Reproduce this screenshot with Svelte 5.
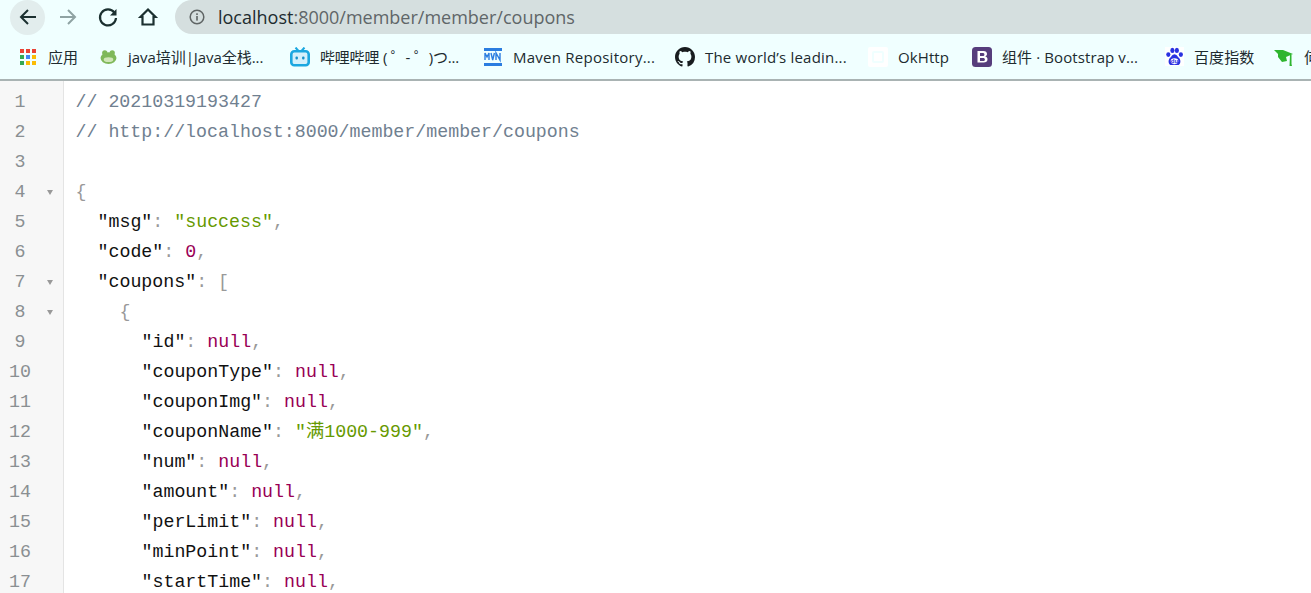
<script>
	const bookmarks = [
		{ icon: 'apps', label: '应用', width: 80 },
		{ icon: 'frog', label: 'java培训|Java全栈...', width: 192 },
		{ icon: 'bili', label: '哔哩哔哩 ( ゜- ゜)つ...', width: 193 },
		{ icon: 'mvn', label: 'Maven Repository...', width: 192 },
		{ icon: 'github', label: 'The world’s leadin...', width: 193 },
		{ icon: 'ok', label: 'OkHttp', width: 104 },
		{ icon: 'boot', label: '组件 · Bootstrap v...', width: 192 },
		{ icon: 'baidu', label: '百度指数', width: 110 },
		{ icon: 'cap', label: '何', width: 40 }
	];

	const str = (t) => ({ c: 'str', t });
	const key = (t) => ({ c: 'key', t });
	const p = (t) => ({ c: 'punc', t });
	const nul = { c: 'kw', t: 'null' };
	const nullRow = (name) => ({ indent: 6, parts: [key(`"${name}"`), p(': '), nul, p(',')] });

	const lines = [
		{ indent: 0, parts: [{ c: 'cmt', t: '// 20210319193427' }] },
		{ indent: 0, parts: [{ c: 'cmt', t: '// http://localhost:8000/member/member/coupons' }] },
		{ indent: 0, parts: [] },
		{ indent: 0, fold: true, parts: [p('{')] },
		{ indent: 2, parts: [key('"msg"'), p(': '), str('"success"'), p(',')] },
		{ indent: 2, parts: [key('"code"'), p(': '), { c: 'kw', t: '0' }, p(',')] },
		{ indent: 2, fold: true, parts: [key('"coupons"'), p(': [')] },
		{ indent: 4, fold: true, parts: [p('{')] },
		nullRow('id'),
		nullRow('couponType'),
		nullRow('couponImg'),
		{ indent: 6, parts: [key('"couponName"'), p(': '), str('"满1000-999"'), p(',')] },
		nullRow('num'),
		nullRow('amount'),
		nullRow('perLimit'),
		nullRow('minPoint'),
		nullRow('startTime')
	];

	const appColors = [
		['#ea4335', '#ea4335', '#ea4335'],
		['#34a853', '#4285f4', '#fbbc05'],
		['#34a853', '#fbbc05', '#fbbc05']
	];
</script>

<div class="chrome">
	<div class="toolbar">
		<button class="nav back" aria-label="back">
			<svg viewBox="0 0 24 24" width="24" height="24"><path d="M20 12H5M12 5l-7 7 7 7" fill="none" stroke="#1b3030" stroke-width="2"/></svg>
		</button>
		<button class="nav fwd" aria-label="forward">
			<svg viewBox="0 0 24 24" width="24" height="24"><path d="M4 12h15M12 5l7 7-7 7" fill="none" stroke="#8fa3a3" stroke-width="2"/></svg>
		</button>
		<button class="nav reload" aria-label="reload">
			<svg viewBox="0 0 24 24" width="24" height="24"><path d="M18.400 7.600A8 8 0 1 0 20 13" fill="none" stroke="#1b3030" stroke-width="2.200"/><path d="M20.500 4v6.500H14z" fill="#1b3030"/></svg>
		</button>
		<button class="nav home" aria-label="home">
			<svg viewBox="0 0 24 24" width="24" height="24"><path d="M12 4.500 4.500 12h2v7.500h11V12h2z" fill="none" stroke="#1b3030" stroke-width="2.200"/></svg>
		</button>
		<div class="omnibox">
			<svg class="info" viewBox="0 0 16 16" width="16" height="16"><circle cx="8" cy="8" r="6.800" fill="none" stroke="#5f6565" stroke-width="1.500"/><rect x="7.200" y="7" width="1.600" height="4.600" fill="#5f6565"/><rect x="7.200" y="4.300" width="1.600" height="1.700" fill="#5f6565"/></svg>
			<span class="url"><b>localhost</b>:8000/member/member/coupons</span>
		</div>
	</div>
	<div class="bookmarks">
		{#each bookmarks as b}
			<div class="bm {b.icon}" style="width: {b.width}px">
				<span class="ico">
					{#if b.icon === 'apps'}
						<svg viewBox="0 0 16 16" width="16" height="16">
							{#each appColors as row, y}
								{#each row as fill, x}<rect x={x * 6} y={y * 6} width="4" height="4" {fill} />{/each}
							{/each}
						</svg>
					{:else if b.icon === 'frog'}
						<svg viewBox="0 0 16 16" width="17" height="17"><ellipse cx="8" cy="9.500" rx="7.500" ry="5.500" fill="#7fb85a"/><circle cx="4.500" cy="4.500" r="2.500" fill="#7fb85a"/><circle cx="11.500" cy="4.500" r="2.500" fill="#7fb85a"/><ellipse cx="8" cy="11" rx="4.500" ry="2.200" fill="#cfe5b8"/></svg>
					{:else if b.icon === 'bili'}
						<svg viewBox="0 0 20 20" width="20" height="20"><path d="M5.500 .5 8.500 4M14.500 .5 11.500 4" stroke="#1ba7e0" stroke-width="2" fill="none"/><rect x="1.300" y="4.300" width="17.400" height="14" rx="3" fill="#d4f0fb" stroke="#1ba7e0" stroke-width="2.600"/><rect x="5.500" y="9.500" width="2.400" height="3" rx="1" fill="#1590c8"/><rect x="12.100" y="9.500" width="2.400" height="3" rx="1" fill="#1590c8"/></svg>
					{:else if b.icon === 'mvn'}
						<svg viewBox="0 0 18 18" width="18" height="18"><rect y="0" width="18" height="3" fill="#2b7de0"/><rect y="15" width="18" height="3" fill="#2b7de0"/><path d="M1 12V5l2 4 2-4v7M7 5l1.700 7L10.400 5M12 12V5l4 7V5" fill="none" stroke="#2b7de0" stroke-width="1.400"/></svg>
					{:else if b.icon === 'github'}
						<svg viewBox="0 0 16 16" width="20" height="20"><path fill="#181c1f" d="M8 0C3.580 0 0 3.580 0 8c0 3.540 2.290 6.530 5.470 7.590.4.070.55-.17.55-.38 0-.19-.01-.82-.01-1.490-2.010.37-2.530-.49-2.690-.94-.09-.23-.48-.94-.82-1.130-.28-.15-.68-.52-.01-.53.63-.01 1.080.58 1.230.82.72 1.210 1.870.87 2.330.66.07-.52.28-.87.51-1.070-1.780-.2-3.640-.89-3.640-3.950 0-.87.31-1.590.82-2.150-.08-.2-.36-1.020.08-2.120 0 0 .67-.21 2.200.82.64-.18 1.320-.27 2-.27s1.360.09 2 .27c1.530-1.040 2.200-.82 2.200-.82.44 1.100.16 1.920.08 2.120.51.56.82 1.270.82 2.150 0 3.070-1.870 3.750-3.650 3.950.29.25.54.73.54 1.480 0 1.070-.01 1.930-.01 2.200 0 .21.15.46.55.38A8.010 8.010 0 0 0 16 8c0-4.420-3.580-8-8-8z"/></svg>
					{:else if b.icon === 'ok'}
						<svg viewBox="0 0 20 20" width="20" height="20"><rect width="20" height="20" rx="2" fill="#fff"/><rect x="5" y="5" width="10" height="10" rx="1" fill="none" stroke="#f0ffff" stroke-width="2"/></svg>
					{:else if b.icon === 'boot'}
						<svg viewBox="0 0 20 20" width="20" height="20"><rect width="20" height="20" rx="3.500" fill="#563d7c"/><path fill="#fff" fill-rule="evenodd" d="M5.500 4h6c2.200 0 3.500 1.100 3.500 2.900 0 1.200-.7 2.100-1.800 2.500 1.500.3 2.300 1.400 2.300 2.800 0 2.100-1.500 3.300-4 3.300h-6zM8 6v3h2.600c1.200 0 1.800-.5 1.800-1.500S11.800 6 10.700 6zM8 11v3h3c1.200 0 1.900-.5 1.900-1.500S12.200 11 11 11z"/></svg>
					{:else if b.icon === 'baidu'}
						<svg viewBox="0 0 20 20" width="19" height="19"><rect width="20" height="20" fill="#fff"/><ellipse cx="3.500" cy="8" rx="2.200" ry="2.600" fill="#2932e1"/><ellipse cx="7.800" cy="3.600" rx="2.200" ry="2.800" fill="#2932e1"/><ellipse cx="12.500" cy="3.600" rx="2.200" ry="2.800" fill="#2932e1"/><ellipse cx="16.700" cy="8" rx="2.200" ry="2.600" fill="#2932e1"/><path d="M10 7.500c-2.500 0-3 2.500-4.500 3.700C3 13 3 19 7 19c1.300 0 2-.4 3-.4s1.800.4 3 .4c4 0 4-6 1.500-7.800C13 10 12.500 7.500 10 7.500z" fill="#2932e1"/><ellipse cx="10" cy="14.800" rx="4" ry="3" fill="#fff"/><text x="10" y="17" text-anchor="middle" font-size="6.500" font-weight="700" font-family="Liberation Sans, sans-serif" fill="#2932e1">du</text></svg>
					{:else if b.icon === 'cap'}
						<svg viewBox="0 0 20 20" width="20" height="20"><path d="M0 3h9l10 4-7 3 1 4-5 1-4-5V7z" fill="#2fb52f"/><path d="M16 8h1.500v9l.5 2h-2.500z" fill="#2fb52f"/></svg>
					{/if}
				</span>
				<span class="label">{b.label}</span>
			</div>
		{/each}
	</div>
</div>

<main class="editor">
	<div class="gutter">
		{#each lines as line, i}
			<div class="gline">
				<span class="num">{i + 1}</span>
				{#if line.fold}<span class="fold"></span>{/if}
			</div>
		{/each}
	</div>
	<div class="code">
		{#each lines as line}
			<div class="line" style="padding-left: {line.indent * 11}px">
				{#each line.parts as part}<span class={part.c}>{part.t}</span>{/each}
			</div>
		{/each}
	</div>
</main>

<style>
	:global(body) {
		background: #fff;
		overflow: hidden;
	}

	.chrome {
		background: #f0ffff;
		border-bottom: 2px solid #a9b3b3;
		height: 79px;
		font-family: "Open Sans", "Noto Sans CJK SC", sans-serif;
	}

	.toolbar {
		display: flex;
		align-items: center;
		height: 34px;
		padding-left: 10px;
	}

	.nav {
		width: 35px;
		height: 35px;
		margin-right: 5px;
		padding: 0;
		border: 0;
		border-radius: 50%;
		background: none;
		display: flex;
		align-items: center;
		justify-content: center;
		flex: none;
	}

	.back {
		background: #e2eded;
	}

	.omnibox {
		flex: 1;
		height: 34px;
		margin-left: 5px;
		background: #d5dfdf;
		border-radius: 17px 0 0 17px;
		display: flex;
		align-items: center;
		padding-left: 14px;
	}

	.info {
		margin-right: 13px;
	}

	.url {
		font-size: 18px;
		color: #5f6668;
		font-family: "Open Sans", sans-serif;
	}

	.url b {
		font-weight: 400;
		color: #202b2f;
	}

	.bookmarks {
		display: flex;
		align-items: center;
		height: 45px;
		padding-left: 18px;
		overflow: hidden;
	}

	.bm {
		display: flex;
		align-items: center;
		flex: none;
		font-size: 15px;
		letter-spacing: 0.1px;
		color: #202b2f;
		white-space: nowrap;
	}

	.frog {
		letter-spacing: -0.05px;
	}

	.bili {
		letter-spacing: -0.2px;
	}

	.mvn {
		letter-spacing: 0.25px;
	}

	.github {
		letter-spacing: 0.2px;
	}

	.ico {
		width: 20px;
		height: 20px;
		margin-right: 10px;
		display: flex;
		align-items: center;
		justify-content: center;
	}

	.editor {
		display: flex;
		height: 512px;
		overflow: hidden;
		font-family: "Liberation Mono", "Noto Sans CJK SC", monospace;
		font-size: 18.27px;
		line-height: 30px;
	}

	.gutter {
		width: 63px;
		flex: none;
		background: #f7f7f7;
		border-right: 1px solid #e4e4e4;
		padding-top: 6px;
	}

	.gline {
		display: flex;
		align-items: center;
		height: 30px;
		color: #8a8f92;
	}

	.num {
		width: 40px;
		text-align: center;
	}

	.fold {
		margin-left: 6.5px;
		border-left: 3.5px solid transparent;
		border-right: 3.5px solid transparent;
		border-top: 5px solid #999;
	}

	.code {
		padding-top: 6px;
		padding-left: 11.5px;
		white-space: pre;
	}

	.line {
		height: 30px;
	}

	.cmt {
		color: #708090;
	}

	.key {
		color: #111;
	}

	.punc {
		color: #999;
	}

	.str {
		color: #669900;
	}

	.kw {
		color: #990055;
	}
</style>
